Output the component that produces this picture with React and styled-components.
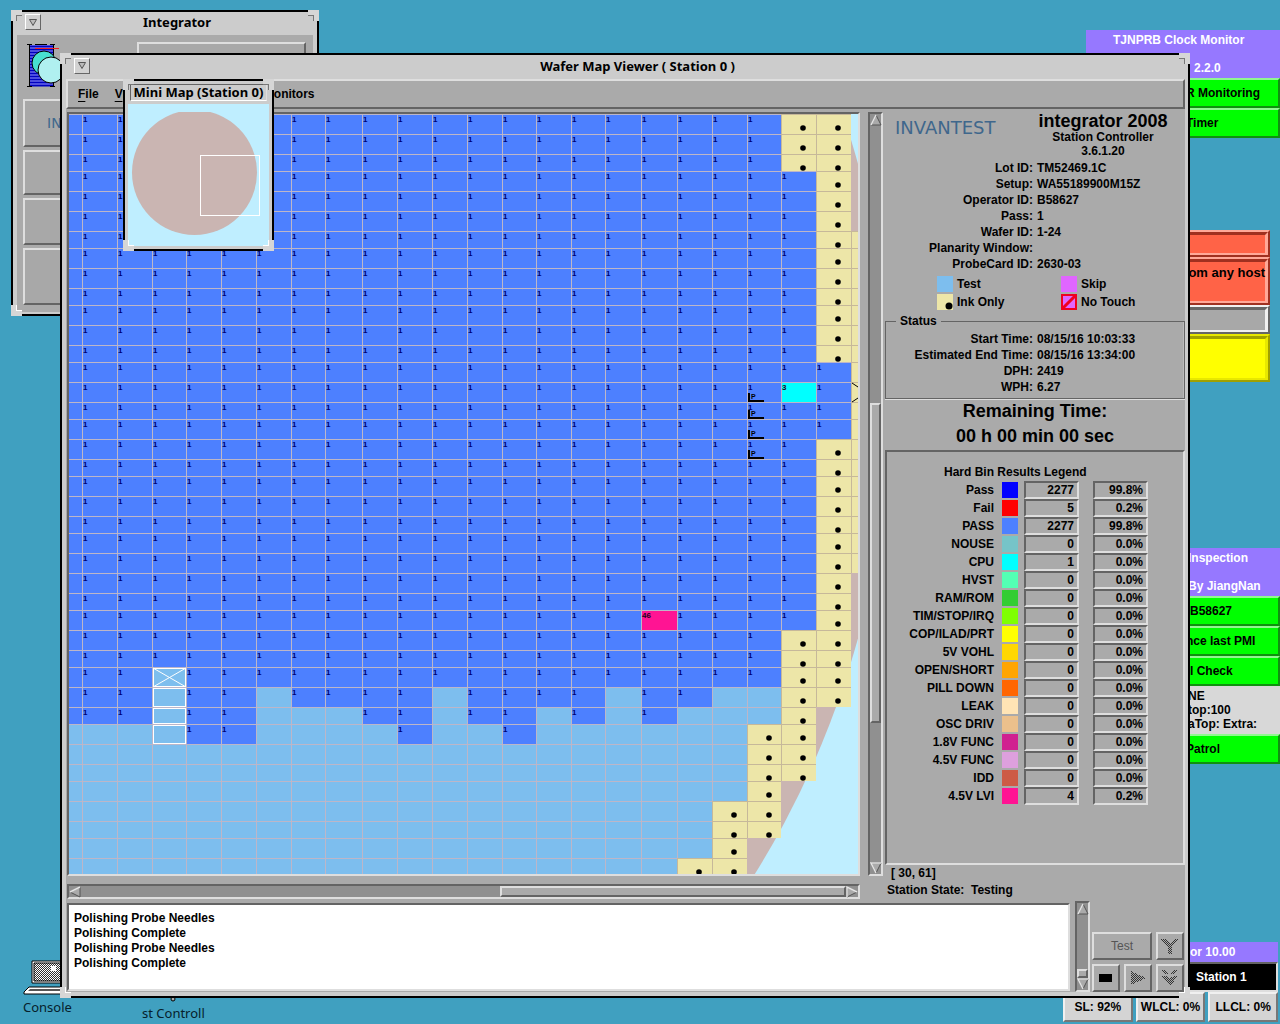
import React from "react";
import styled, { createGlobalStyle, css } from "styled-components";

const C = {
  desktop: "#40a0c0",
  panel: "#aaaaaa",
  frame: "#cccccc",
  light: "#dedede",
  dark: "#646464",
  trough: "#909090",
  violet: "#9678ff",
  green: "#00ff00",
  pass: "#4d80ff",
  test: "#7dbeee",
  ink: "#ede6a8",
  wafer: "#cab5b2",
  sky: "#bfeeff",
};

const Global = createGlobalStyle`
  * { box-sizing: border-box; }
  body { margin: 0; background: ${C.desktop}; }
  button, textarea { font: inherit; color: inherit; margin: 0; border-radius: 0; }
  h1, h2, p { margin: 0; font: inherit; }
`;

const raised = css`
  border: 2px solid;
  border-color: ${C.light} ${C.dark} ${C.dark} ${C.light};
`;
const sunken = css`
  border: 2px solid;
  border-color: ${C.dark} ${C.light} ${C.light} ${C.dark};
`;

const Desktop = styled.main`
  position: relative;
  min-height: 100vh;
  overflow: hidden;
  background: ${C.desktop};
  color: #000;
  font: bold 12px/16px "Liberation Sans", Arial, sans-serif;
  white-space: nowrap;
`;

/* ---------- window frame ---------- */

const Frame = styled.section`
  position: absolute;
  display: flex;
  flex-direction: column;
  background: ${C.frame};
  border: 2px solid #000;
  padding: 0 4px 4px;
`;
const IntegratorFrame = styled(Frame)`
  left: 11px;
  top: 10px;
  width: 308px;
  height: 306px;
`;
const ViewerFrame = styled(Frame)`
  left: 60px;
  right: 90px;
  top: 53px;
  height: 945px;
  padding: 0 3px 4px 4px;
`;
const MiniFrame = styled(Frame)`
  left: 123px;
  top: 79px;
  width: 151px;
  height: 172px;
  padding: 0 3px 3px;
`;
const Corner = styled.i`
  position: absolute;
  width: 11px;
  height: 11px;
  border: 0 solid #d6d6d6;
  ${(p) => (p.$v === "top" ? "top: -2px; border-top-width: 5px;" : "bottom: -2px; border-bottom-width: 5px;")}
  ${(p) => (p.$h === "left" ? "left: -2px; border-left-width: 5px;" : "right: -2px; border-right-width: 5px;")}
  &::after {
    content: "";
    position: absolute;
    inset: 0;
    border: 0 solid #777;
    ${(p) => (p.$v === "top" ? "border-top-width: 1px;" : "border-bottom-width: 1px; border-color: #fff;")}
    ${(p) => (p.$h === "left" ? "border-left-width: 1px;" : "border-right-width: 1px;")}
  }
`;
const TitleBar = styled.header`
  flex: none;
  display: flex;
  align-items: center;
  height: ${(p) => p.$h}px;
  padding: ${(p) => (p.$mini ? "0" : "0 0 3px 8px")};
  font: bold 13px/16px "Noto Sans", "DejaVu Sans", sans-serif;
`;
const Title = styled.h1`
  flex: 1;
  text-align: center;
  ${(p) =>
    p.$boxed &&
    css`
      ${sunken}
      border-width: 1px;
      border-bottom-color: #fff;
      line-height: 14px;
      height: 17px;
      margin: 0 2px;
    `}
`;
const MenuBox = styled.button`
  width: 16px;
  height: 16px;
  padding: 0;
  display: grid;
  place-items: center;
  background: #d2d2d2;
  border: 1px solid;
  border-color: #fff #666 #666 #fff;
`;
const Corners = () =>
  ["top", "bottom"].flatMap((v) => ["left", "right"].map((h) => <Corner key={v + h} $v={v} $h={h} />));

const WindowMenu = () => (
  <MenuBox aria-label="Window menu">
    <svg width="8" height="7" viewBox="0 0 8 7">
      <path d="M0.5 0.5H7.5L4 6.5Z" fill="#bbb" stroke="#555" />
    </svg>
  </MenuBox>
);

/* ---------- integrator window ---------- */

const IntegratorBody = styled.div`
  flex: 1;
  display: grid;
  grid-template-columns: 114px 1fr;
  grid-template-rows: 54px 48px 45px 47px 57px;
  row-gap: 3px;
  padding: 7px 7px 7px 6px;
  background: ${C.panel};
`;
const Slab = styled.button`
  ${raised}
  background: #a8a8a8;
  text-align: left;
  padding: 0 0 0 22px;
  grid-column: ${(p) => (p.$wide ? "1 / -1" : "auto")};
`;
const Wordmark = styled.span`
  font: ${(p) => (p.$small ? 14 : 18)}px/20px "DejaVu Sans", sans-serif;
  color: #3f678c;
`;

const WaferIcon = () => (
  <svg width="40" height="46" viewBox="0 0 40 46">
    <rect x="7" y="3" width="23" height="41" fill="#9a9aff" />
    {Array.from({ length: 14 }, (_, i) => (
      <path key={i} d={`M7 ${4.5 + i * 3}H30`} stroke="#0000c0" strokeWidth="2" />
    ))}
    <path d="M4 2.5H9M12 2.5H24M27 2.5H32M4 44.5H9M27 44.5H32M6.500 3V44M30.500 3V44" stroke="#000" />
    <circle cx="21" cy="21" r="12" fill="#48e0d0" stroke="#000" />
    <circle cx="28" cy="28" r="13" fill="#b0f0f0" stroke="#000" />
    <path d="M12 6.500H36" stroke="#f02020" />
  </svg>
);

/* ---------- viewer window ---------- */

const MenuBar = styled.nav`
  flex: none;
  display: flex;
  align-items: center;
  gap: 16px;
  height: 30px;
  padding: 0 10px;
  background: ${C.panel};
  ${raised}
`;
const MenuItem = styled.button`
  padding: 0;
  border: 0;
  background: none;
  margin-left: ${(p) => (p.$far ? 106 : 0)}px;
  &::first-letter { text-decoration: underline; text-underline-offset: 3px; }
`;
const ViewerBody = styled.div`
  flex: 1;
  min-height: 0;
  display: flex;
  flex-direction: column;
  background: ${C.panel};
  padding: 3px 0 0 1px;
`;
const Upper = styled.div`
  height: 788px;
  display: flex;
  gap: 2px;
`;
const MapSide = styled.div`
  flex: 1;
  min-width: 0;
  display: grid;
  grid-template-columns: 1fr 15px;
  grid-template-rows: 764px 15px;
  gap: 8px;
`;
const MapPort = styled.div`
  ${sunken}
  overflow: hidden;
  background: ${C.sky};
  min-width: 0;
  svg { display: block; }
`;
const Bar = styled.div`
  ${sunken}
  background: ${C.trough};
  display: flex;
  flex-direction: ${(p) => (p.$vertical ? "column" : "row")};
  min-width: 0;
  min-height: 0;
`;
const Arrow = styled.button`
  flex: none;
  width: 12px;
  height: 12px;
  padding: 0;
  border: 0;
  background: none;
  svg { display: block; }
`;
const Track = styled.div`
  flex: ${(p) => p.$grow};
`;
const Thumb = styled.div`
  flex: ${(p) => p.$grow};
  background: ${C.panel};
  ${raised}
`;
const ArrowButton = ({ dir }) => {
  const pts = { up: "6,1 11,11 1,11", down: "1,1 11,1 6,11", left: "1,6 11,1 11,11", right: "1,1 11,6 1,11" }[dir];
  const hi = { up: "M6 1L1 11", down: "M6 11L1 1H11", left: "M1 6L11 1", right: "M1 11V1L11 6" }[dir];
  return (
    <Arrow aria-label={`Scroll ${dir}`}>
      <svg width="12" height="12" viewBox="0 0 12 12">
        <polygon points={pts} fill="#aaa" stroke="#555" />
        <path d={hi} fill="none" stroke="#e4e4e4" strokeWidth="1.500" />
      </svg>
    </Arrow>
  );
};
const ScrollBar = ({ vertical, before, size, after }) => (
  <Bar $vertical={vertical}>
    <ArrowButton dir={vertical ? "up" : "left"} />
    <Track $grow={before} />
    <Thumb $grow={size} />
    <Track $grow={after} />
    <ArrowButton dir={vertical ? "down" : "right"} />
  </Bar>
);

/* ---------- wafer drawing ---------- */

const XS = [48, 82, 117, 152, 186, 221, 256, 291, 325, 362, 397, 432, 467, 502, 536, 571, 605, 641, 677, 712, 747, 781, 816, 851, 887];
const YS = [114, 134, 154, 171, 191, 211, 231, 248, 268, 288, 305, 325, 345, 362, 382, 402, 419, 439, 459, 476, 496, 516, 533, 553, 573, 593, 610, 630, 650, 667, 687, 707, 724, 744, 764, 781, 801, 821, 838, 858, 878];
const PASS_END = [724, 724, 724, 667, 744, 744, 687, 707, 707, 724, 744, 687, 724, 744, 707, 724, 687, 724, 707, 687, 687];

function kindOf(c, y) {
  if (c <= 20) {
    if (c === 20 && y >= 724) return y < 838 ? "ink" : null;
    if (c === 19 && y >= 801) return "ink";
    if (c === 18 && y >= 858) return "ink";
    return y < PASS_END[c] ? "pass" : "test";
  }
  if (c === 21) {
    if (y < 171) return "ink";
    if (y < 630) return "pass";
    return y < 781 ? "ink" : null;
  }
  if (c === 22) {
    if (y >= 362 && y < 439) return "pass";
    return y < 707 ? "ink" : null;
  }
  return y >= 231 && y < 573 ? "ink" : null;
}

const WaferMap = () => {
  const cells = [];
  for (let c = 0; c < XS.length - 1; c++) {
    for (let r = 0; r < YS.length - 1; r++) {
      const x = XS[c];
      const y = YS[r];
      const kind = kindOf(c, y);
      if (!kind) continue;
      const w = XS[c + 1] - x;
      const h = YS[r + 1] - y;
      const bin = c === 21 && y === 382 ? "3" : c === 17 && y === 610 ? "46" : "1";
      const fill = bin === "3" ? "#00ffff" : bin === "46" ? "#ff1493" : C[kind];
      cells.push(
        <g key={`${c}-${r}`}>
          <rect x={x} y={y} width={w} height={h} fill={kind === "ink" ? "#c6b89a" : "#bdb6c8"} />
          <rect x={x + 1} y={y + 1} width={w - 1} height={h - 1} fill={fill} />
          {kind === "pass" && c > 0 && (
            <text x={x + 1} y={y + 8} fill={bin === "1" ? "#000070" : "#200020"}>
              {bin}
            </text>
          )}
          {kind === "ink" && c < 23 && <circle cx={x + 22} cy={y + 14} r="2.800" fill="#000" shapeRendering="auto" />}
        </g>
      );
    }
  }
  return (
    <svg width="100%" height="760" viewBox="69 114 789 760" preserveAspectRatio="xMinYMin slice" shapeRendering="crispEdges" fontSize="8" fontFamily="Liberation Sans, sans-serif">
      <circle cx="-5" cy="401" r="895" fill={C.wafer} shapeRendering="auto" />
      {cells}
      {[402, 419, 439, 459].map((y) => (
        <g key={y}>
          <path d={`M749 ${y - 9}V${y - 1}H764`} fill="none" stroke="#000" strokeWidth="2" />
          <text x="751" y={y - 3} fontSize="7">P</text>
        </g>
      ))}
      <g fill="none" stroke="#fff" strokeWidth="1">
        {[667, 687, 707, 724].map((y, i) => (
          <rect key={y} x="153.500" y={y + 1.5} width="32" height={[18, 18, 15, 18][i]} />
        ))}
        <path d="M153 668L186 687M186 668L153 687" shapeRendering="auto" />
      </g>
      <path d="M852 383L858 387M852 402L858 398" stroke="#000" shapeRendering="auto" />
    </svg>
  );
};

/* ---------- side panel ---------- */

const Side = styled.aside`
  width: 300px;
  flex: none;
  display: flex;
  flex-direction: column;
`;
const Brand = styled.div`
  display: grid;
  grid-template-columns: 136px 1fr;
  padding: 0 0 0 10px;
  height: 48px;
  ${Wordmark} { padding-top: 6px; }
`;
const Product = styled.div`
  text-align: center;
  line-height: 14px;
  padding-right: 10px;
  h2 { font-size: 18px; line-height: 18px; }
`;
const Facts = styled.dl`
  display: grid;
  grid-template-columns: 148px 1fr;
  column-gap: 4px;
  margin: 0;
  line-height: 16px;
  dt { text-align: right; }
  dd { margin: 0; }
`;
const Keys = styled.ul`
  list-style: none;
  margin: 4px 0 0;
  padding: 0 0 0 52px;
  display: grid;
  grid-template-columns: 124px 1fr;
  row-gap: 2px;
  li { display: flex; gap: 4px; height: 16px; }
`;
const Swatch = styled.svg`
  display: block;
  width: 16px;
  height: 16px;
  background: ${(p) => p.$c};
`;
const Status = styled.fieldset`
  margin: 3px 0 0;
  padding: 2px 0;
  height: 86px;
  border: 1px solid ${C.dark};
  box-shadow: 0 1px 0 ${C.light}, inset -1px 0 0 #bbb;
  legend { margin-left: 10px; padding: 0 4px; line-height: 16px; }
  ${Facts} { grid-template-columns: 147px 1fr; }
`;
const Remaining = styled.div`
  text-align: center;
  font-size: 18px;
  line-height: 25px;
  height: 51px;
`;
const Results = styled.section`
  ${sunken}
  height: 415px;
  padding: 12px 0 0 8px;
`;
const Bins = styled.table`
  border-collapse: separate;
  border-spacing: 0;
  line-height: 16px;
  caption { line-height: 17px; padding: 0 0 0 49px; text-align: left; }
  th { width: 99px; padding: 0; text-align: right; font-weight: bold; height: 18px; }
  td { padding: 0 0 0 8px; }
  td + td { padding-left: 6px; }
  td + td + td { padding-left: 14px; }
`;
const Readout = styled.output`
  display: block;
  ${sunken}
  width: 55px;
  height: 18px;
  line-height: 14px;
  padding-right: 3px;
  text-align: right;
`;
const Footer = styled.div`
  padding: 0 2px;
  line-height: 17px;
  p:first-child { padding-left: 4px; }
`;

const lotFacts = [
  ["Lot ID:", "TM52469.1C"],
  ["Setup:", "WA55189900M15Z"],
  ["Operator ID:", "B58627"],
  ["Pass:", "1"],
  ["Wafer ID:", "1-24"],
  ["Planarity Window:", ""],
  ["ProbeCard ID:", "2630-03"],
];
const statusFacts = [
  ["Start Time:", "08/15/16 10:03:33"],
  ["Estimated End Time:", "08/15/16 13:34:00"],
  ["DPH:", "2419"],
  ["WPH:", "6.27"],
];
const bins = [
  ["Pass", "#0000ff", "2277", "99.8%"],
  ["Fail", "#ff0000", "5", "0.2%"],
  ["PASS", "#4d80ff", "2277", "99.8%"],
  ["NOUSE", "#76c4c8", "0", "0.0%"],
  ["CPU", "#00ffff", "1", "0.0%"],
  ["HVST", "#54ffb4", "0", "0.0%"],
  ["RAM/ROM", "#32cd32", "0", "0.0%"],
  ["TIM/STOP/IRQ", "#7fff00", "0", "0.0%"],
  ["COP/ILAD/PRT", "#ffff00", "0", "0.0%"],
  ["5V VOHL", "#ffd700", "0", "0.0%"],
  ["OPEN/SHORT", "#ffa500", "0", "0.0%"],
  ["PILL DOWN", "#ff6600", "0", "0.0%"],
  ["LEAK", "#ffe4b5", "0", "0.0%"],
  ["OSC DRIV", "#ebc08c", "0", "0.0%"],
  ["1.8V FUNC", "#d02090", "0", "0.0%"],
  ["4.5V FUNC", "#dda0dd", "0", "0.0%"],
  ["IDD", "#cd5b45", "0", "0.0%"],
  ["4.5V LVI", "#ff1493", "4", "0.2%"],
];

const FactList = ({ rows }) => (
  <Facts>
    {rows.map(([k, v]) => (
      <React.Fragment key={k}>
        <dt>{k}</dt>
        <dd>{v}</dd>
      </React.Fragment>
    ))}
  </Facts>
);

/* ---------- log and controls ---------- */

const Lower = styled.div`
  flex: 1;
  min-height: 0;
  display: grid;
  grid-template-columns: 1fr 15px 94px;
  grid-template-rows: 100%;
  margin-top: 1px;
  padding-right: 1px;
`;
const Log = styled.textarea`
  ${sunken}
  display: block;
  width: 100%;
  height: 88px;
  margin-top: 2px;
  padding: 6px 5px 5px;
  background: #fff;
  line-height: 15px;
  resize: none;
  overflow: hidden;
  outline: 0;
`;
const LogCell = styled.div`
  padding-right: 5px;
`;
const Controls = styled.div`
  align-self: end;
  display: grid;
  grid-template-columns: repeat(3, 28px);
  grid-auto-rows: 28px;
  gap: 4px;
  padding: 0 0 0 2px;
`;
const Control = styled.button`
  ${raised}
  background: ${C.panel};
  padding: 0;
  display: grid;
  place-items: center;
  grid-column: span ${(p) => p.$span || 1};
  color: #555;
  font-weight: normal;
`;
const Stipple = ({ d }) => (
  <svg width="18" height="18" viewBox="0 0 18 18" shapeRendering="crispEdges">
    <defs>
      <pattern id="stipple" width="2" height="2" patternUnits="userSpaceOnUse">
        <rect width="1" height="1" fill="#333" />
        <rect x="1" y="1" width="1" height="1" fill="#333" />
      </pattern>
    </defs>
    <path d={d} fill="url(#stipple)" />
  </svg>
);

/* ---------- mini map ---------- */

const MiniBody = styled.div`
  flex: 1;
  background: ${C.sky};
  svg { display: block; }
`;

/* ---------- monitors on the right edge ---------- */

const Monitor = styled.section`
  position: absolute;
  top: ${(p) => p.$top}px;
  right: ${(p) => p.$right || 0}px;
  width: 194px;
  display: flex;
  flex-direction: column;
`;
const Banner = styled.header`
  background: ${C.violet};
  color: #fff;
  line-height: ${(p) => (p.$short ? 20 : 28)}px;
  height: ${(p) => (p.$short ? 20 : 48)}px;
  display: flex;
  flex-direction: column;
  justify-content: center;
  p { padding-left: ${(p) => p.$pad}px; }
  p:first-child { padding-left: ${(p) => p.$first || p.$pad}px; }
`;
const Lamp = styled.button`
  height: 30px;
  background: ${C.green};
  border: 2px solid;
  border-color: #90f890 #109010 #109010 #90f890;
  padding: 0 0 0 ${(p) => p.$pad || 98}px;
  text-align: left;
`;
const Note = styled.div`
  background: #d8d8d8;
  height: 48px;
  padding: 3px 0 0 102px;
  line-height: 14px;
`;
const StationButton = styled.button`
  height: 30px;
  background: #000;
  color: #fff;
  ${sunken}
  padding: 0 0 0 110px;
  text-align: left;
`;
const Gauges = styled.div`
  display: flex;
  gap: 3px;
  margin-left: -21px;
`;
const Gauge = styled.div`
  flex: 1;
  height: 30px;
  line-height: 26px;
  text-align: center;
  background: #d4d4d4;
  border: 2px solid;
  border-color: #f0f0f0 #777 #777 #f0f0f0;
`;
const Alarm = styled.div`
  height: ${(p) => p.$h}px;
  border: 2px solid;
  border-color: ${(p) => `${p.$hi} ${p.$lo} ${p.$lo} ${p.$hi}`};
`;
const AlarmFace = styled.div`
  height: 100%;
  background: ${(p) => p.$bg};
  border: 3px solid;
  border-color: ${(p) => `${p.$lo} ${p.$hi} ${p.$hi} ${p.$lo}`};
  border-bottom-width: 2px;
  line-height: 22px;
  text-align: right;
  font-size: 13px;
`;
const DeskIcon = styled.figure`
  position: absolute;
  left: ${(p) => p.$x}px;
  top: ${(p) => p.$y}px;
  margin: 0;
  font: 13px/18px "Noto Sans", "DejaVu Sans", sans-serif;
  color: #06202c;
  svg { display: block; }
  figcaption { padding-top: ${(p) => p.$gap}px; }
`;

const alarms = [
  [27, "#ff6347", "#ffa898", "#a03020", ""],
  [48, "#ff6347", "#ffa898", "#a03020", "om any host"],
  [29, "#a8a8a8", "#f0f0f0", "#666666", ""],
  [48, "#ffff00", "#e8e800", "#a0a000", ""],
];

export default function App() {
  return (
    <Desktop>
      <Global />

      <Monitor $top={30}>
        <Banner $pad={108} $first={27}>
          <p>TJNPRB Clock Monitor</p>
          <p>2.2.0</p>
        </Banner>
        <Lamp>R Monitoring</Lamp>
        <Lamp>Timer</Lamp>
      </Monitor>

      <Monitor $top={230} $right={10}>
        {alarms.map(([h, bg, hi, lo, text], i) => (
          <Alarm key={i} $h={h} $hi={hi} $lo={lo}>
            <AlarmFace $bg={bg} $hi={hi} $lo={lo}>{text}</AlarmFace>
          </Alarm>
        ))}
      </Monitor>

      <Monitor $top={548}>
        <Banner $pad={102}>
          <p>Inspection</p>
          <p>By JiangNan</p>
        </Banner>
        <Lamp $pad={102}>B58627</Lamp>
        <Lamp>nce last PMI</Lamp>
        <Lamp $pad={102}>l Check</Lamp>
        <Note>
          NE
          <br />
          top:100
          <br />
          aTop: Extra:
        </Note>
        <Lamp>Patrol</Lamp>
      </Monitor>

      <Monitor $top={942} $right={2}>
        <Banner $short $pad={106}>
          <p>or 10.00</p>
        </Banner>
        <StationButton>Station 1</StationButton>
        <Gauges>
          <Gauge>SL: 92%</Gauge>
          <Gauge>WLCL: 0%</Gauge>
          <Gauge>LLCL: 0%</Gauge>
        </Gauges>
      </Monitor>

      <DeskIcon $x={23} $y={960} $gap={3}>
        <svg width="48" height="35" viewBox="0 0 48 35">
          <path d="M9 1H46V23H9Z" fill="#fff" stroke="#000" />
          <path d="M11 3H44V21H11Z" fill="url(#stipple)" stroke="#000" />
          <rect x="28" y="6" width="5" height="5" fill="#fff" />
          <path d="M6 27H48V34H1V32Z" fill="#fff" stroke="#000" />
          <path d="M7 29H48V31H5Z" fill="#555" />
        </svg>
        <figcaption>Console</figcaption>
      </DeskIcon>
      <DeskIcon $x={142} $y={994} $gap={2}>
        <svg width="64" height="8" viewBox="0 0 64 8">
          <circle cx="31" cy="5" r="2" fill="#aaa" stroke="#000" />
        </svg>
        <figcaption>st Controll</figcaption>
      </DeskIcon>

      <IntegratorFrame>
        <TitleBar $h={23}>
          <WindowMenu />
          <Title>Integrator</Title>
        </TitleBar>
        <IntegratorBody>
          <WaferIcon />
          <Slab aria-label="Status line" />
          <Slab $wide><Wordmark $small>IN</Wordmark></Slab>
          <Slab $wide aria-label="Station" />
          <Slab $wide aria-label="Cassette" />
          <Slab $wide aria-label="Wafer" />
        </IntegratorBody>
        <Corners />
      </IntegratorFrame>

      <ViewerFrame>
        <TitleBar $h={24}>
          <WindowMenu />
          <Title>Wafer Map Viewer ( Station 0 )</Title>
        </TitleBar>
        <MenuBar>
          <MenuItem>File</MenuItem>
          <MenuItem>View</MenuItem>
          <MenuItem $far>Monitors</MenuItem>
        </MenuBar>
        <ViewerBody>
          <Upper>
            <MapSide>
              <MapPort>
                <WaferMap />
              </MapPort>
              <ScrollBar vertical before={279} size={317} after={140} />
              <ScrollBar before={422} size={344} after={0} />
            </MapSide>
            <Side>
              <Brand>
                <Wordmark>INVANTEST</Wordmark>
                <Product>
                  <h2>integrator 2008</h2>
                  <p>Station Controller</p>
                  <p>3.6.1.20</p>
                </Product>
              </Brand>
              <FactList rows={lotFacts} />
              <Keys>
                <li><Swatch $c={C.test} />Test</li>
                <li><Swatch $c="#e066ff" />Skip</li>
                <li>
                  <Swatch $c={C.ink}><circle cx="12" cy="12" r="3.500" /></Swatch>
                  Ink Only
                </li>
                <li>
                  <Swatch $c="#e066ff">
                    <path d="M1 1H15V15H1Z" fill="none" stroke="#f00020" strokeWidth="2" />
                    <path d="M2 14L14 2" stroke="#f00020" strokeWidth="3" />
                  </Swatch>
                  No Touch
                </li>
              </Keys>
              <Status>
                <legend>Status</legend>
                <FactList rows={statusFacts} />
              </Status>
              <Remaining>
                <p>Remaining Time:</p>
                <p>00 h 00 min 00 sec</p>
              </Remaining>
              <Results>
                <Bins>
                  <caption>Hard Bin Results Legend</caption>
                  <tbody>
                    {bins.map(([name, color, count, pct]) => (
                      <tr key={name}>
                        <th scope="row">{name}</th>
                        <td><Swatch $c={color} /></td>
                        <td><Readout>{count}</Readout></td>
                        <td><Readout>{pct}</Readout></td>
                      </tr>
                    ))}
                  </tbody>
                </Bins>
              </Results>
              <Footer>
                <p>[ 30, 61]</p>
                <p>Station State: &nbsp;Testing</p>
              </Footer>
            </Side>
          </Upper>
          <Lower>
            <LogCell>
              <Log
                readOnly
                aria-label="Message log"
                defaultValue={"Polishing Probe Needles\nPolishing Complete\nPolishing Probe Needles\nPolishing Complete"}
              />
            </LogCell>
            <ScrollBar vertical before={60} size={5} after={0} />
            <Controls>
              <Control $span={2}>Test</Control>
              <Control aria-label="Lift"><Stipple d="M0 2H4L9 7L14 2H18L11 10V17H7V10Z" /></Control>
              <Control aria-label="Stop">
                <svg width="14" height="8" viewBox="0 0 14 8"><rect width="13" height="8" fill="#000" /></svg>
              </Control>
              <Control aria-label="Run"><Stipple d="M2 2L17 9L2 16Z" /></Control>
              <Control aria-label="Lower"><Stipple d="M1 1H4L9 5L14 1H17L14 5H4ZM1 7H5L9 9L13 7H17L9 17Z" /></Control>
            </Controls>
          </Lower>
        </ViewerBody>
        <Corners />
      </ViewerFrame>

      <MiniFrame>
        <TitleBar $h={23} $mini>
          <Title $boxed>Mini Map (Station 0)</Title>
        </TitleBar>
        <MiniBody>
          <svg width="141" height="142" viewBox="128 104 141 142">
            <clipPath id="disc"><rect x="128" y="112" width="141" height="130" /></clipPath>
            <circle cx="194.500" cy="172.500" r="62.500" fill={C.wafer} clipPath="url(#disc)" />
            <rect x="200.500" y="155.500" width="59" height="60" fill="none" stroke="#fff" />
          </svg>
        </MiniBody>
        <Corners />
      </MiniFrame>
    </Desktop>
  );
}
